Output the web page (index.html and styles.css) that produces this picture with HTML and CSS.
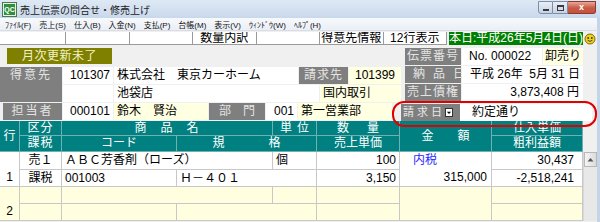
FILE: index.html
```html
<!DOCTYPE html>
<html lang="ja">
<head>
<meta charset="utf-8">
<link rel="stylesheet" href="styles.css">
</head>
<body>
<div class="win">
  <div class="titlebar">
    <div class="appicon">QC</div>
    <div class="title">売上伝票の問合せ・修売上げ</div>
    <div class="winbtns">
      <span class="wb"><span class="minbar"></span></span>
      <span class="wb"><span class="maxbox"></span></span>
      <span class="wb close">x</span>
    </div>
  </div>
  <div class="menubar">
    <span>ﾌｧｲﾙ(F)</span><span>売上(S)</span><span>仕入(B)</span><span>入金(N)</span><span>支払(P)</span><span>台帳(M)</span><span>表示(V)</span><span>ｳｨﾝﾄﾞｳ(W)</span><span>ﾍﾙﾌﾟ(H)</span>
  </div>
  <div class="toolbar">
    <span class="tb"></span><span class="tb"></span><span class="tb"></span>
    <span class="tb">数量内訳</span><span class="tb"></span>
    <span class="tb">得意先情報</span><span class="tb">12行表示</span>
    <span class="today">本日:平成26年5月4日(日)</span>
    <span class="smiley"><svg width="12" height="12" viewBox="0 0 12 12"><circle cx="6" cy="6" r="5" fill="#f2d21a" stroke="#7a6a10" stroke-width="1"/><circle cx="4.2" cy="5" r="0.9" fill="#333"/><circle cx="7.8" cy="5" r="0.9" fill="#333"/><path d="M3.6 7.3 Q6 9.4 8.4 7.3" fill="none" stroke="#333" stroke-width="0.9"/></svg></span>
  </div>
  <div class="form">
    <div class="top">
      <div class="leftcol">
        <div class="olive">月次更新未了</div>
        <div class="cust">
          <div class="lbl c-lbl">得意先</div>
          <div class="fld white num">101307</div>
          <div class="fld white c-name">株式会社　東京カーホーム</div>
          <div class="lbl c-seikyu">請求先</div>
          <div class="fld yellow ctr c-scode">101399</div>
          <div class="fld white c-blank"></div>
          <div class="fld white c-branch">池袋店</div>
          <div class="fld yellow c-kokunai">国内取引</div>
        </div>
      </div>
      <div class="rightcol">
        <div class="rrow">
          <div class="lbl rl spread">伝票番号</div>
          <div class="fld white slip">No. 000022</div>
          <div class="fld yellow oroshi">卸売り</div>
        </div>
        <div class="rrow">
          <div class="lbl rl spread3">納品日</div>
          <div class="fld white date">平成 26年&nbsp;&nbsp;5月 31 日</div>
        </div>
        <div class="rrow">
          <div class="lbl rl spread">売上債権</div>
          <div class="fld white amount">3,873,408 円</div>
        </div>
      </div>
    </div>
    <div class="rowd">
      <div class="lbl tanto">担当者</div>
      <div class="fld white num code6">000101</div>
      <div class="fld yellow person">鈴木　賢治</div>
      <div class="lbl bumon">部　門</div>
      <div class="fld white num code3">001</div>
      <div class="fld yellow dept">第一営業部</div>
      <div class="seikyubi">
        <div class="lbl sbl">請 求 日<span class="dd"><svg width="7" height="7" viewBox="0 0 7 7"><path d="M1 2.5 H6 L3.5 5.2 Z" fill="#000"/></svg></span></div>
        <div class="fld white yakujo">約定通り</div>
      </div>
      <div class="oval"></div>
    </div>
    <div class="table">
      <div class="th h-gyo">行</div>
      <div class="th h-kubun">区分</div>
      <div class="th h-name">商　品　名</div>
      <div class="th h-tani">単位</div>
      <div class="th h-suryo">数　量</div>
      <div class="th h-kingaku">金　　額</div>
      <div class="th h-shiire">仕入単価</div>
      <div class="h-sb"></div>
      <div class="th h-kazei">課税</div>
      <div class="th h-code">コード</div>
      <div class="th h-kikaku">規　　　格</div>
      <div class="th h-tanka">売上単価</div>
      <div class="th h-arari">粗利益額</div>

      <div class="td gyo r1">1</div>
      <div class="td kubun r1a">売１</div>
      <div class="td name r1a">ＡＢＣ芳香剤（ローズ）</div>
      <div class="td tani r1a">個</div>
      <div class="td suryo r1a">100</div>
      <div class="td kingaku r1"><span class="blue">内税</span><span class="kr">315,000</span></div>
      <div class="td shiire r1a">30,437</div>
      <div class="sb">
        <div class="sbup"><svg width="7" height="5" viewBox="0 0 7 5"><path d="M0.5 4.5 L3.5 1 L6.5 4.5 Z" fill="#555"/></svg></div>
      </div>
      <div class="td kubun r1b">課税</div>
      <div class="td code r1b">001003</div>
      <div class="td kikaku r1b">Ｈ－４０１</div>
      <div class="td tanka r1b">3,150</div>
      <div class="td arari r1b">-2,518,241</div>

      <div class="td gyo y r2">2</div>
      <div class="td kubun y r2a"></div>
      <div class="td name y r2a"></div>
      <div class="td tani y r2a"></div>
      <div class="td suryo y r2a"></div>
      <div class="td kingaku y r2"></div>
      <div class="td shiire y r2a"></div>
      <div class="td kubun y r2b"></div>
      <div class="td code y r2b"></div>
      <div class="td kikaku y r2b"></div>
      <div class="td tanka y r2b"></div>
      <div class="td arari y r2b"></div>
    </div>
  </div>
</div>
</body>
</html>
```

FILE: styles.css
```css
* { box-sizing: border-box; }
html, body { margin: 0; padding: 0; }
body {
  width: 600px; height: 222px; overflow: hidden;
  font-family: "Liberation Sans", "Noto Sans CJK JP", sans-serif;
  font-size: 12px; color: #000; background: #c4d5ea;
}
.win { width: 600px; height: 222px; display: flex; flex-direction: column; }

.titlebar {
  height: 18px; flex: none; display: flex; align-items: center;
  background: linear-gradient(#dfe9f5, #c8d8ec);
  padding-left: 3px;
}
.appicon {
  width: 13px; height: 13px; background: #2f8f3a; border: 1px solid #e8f2e8;
  outline: 1px solid #4a7a4a;
  color: #fff; font-size: 7px; line-height: 11px; text-align: center; font-weight: bold;
}
.title { margin-left: 4px; font-size: 10px; color: #1b1b1b; }
.winbtns { margin-left: auto; display: flex; align-self: flex-start; margin-top: 1px; margin-right: 4px; }
.wb {
  width: 15px; height: 13px; border: 1px solid #7d8ea6; border-left-width: 0;
  background: linear-gradient(#e9eff7, #c6d3e4);
  display: flex; align-items: center; justify-content: center;
}
.wb:first-child { border-left-width: 1px; border-radius: 0 0 0 3px; }
.minbar { width: 6px; height: 2px; background: #3b3b3b; margin-top: 4px; }
.maxbox { width: 7px; height: 6px; border: 1px solid #3b3b3b; border-top-width: 2px; }
.wb.close {
  width: 28px; background: linear-gradient(#e8a796, #c75a45 55%, #c8523c);
  border-color: #8a3a2e; color: #fff; font-size: 9px; font-weight: bold; line-height: 1;
  border-radius: 0 0 3px 0;
}

.menubar {
  height: 12px; flex: none; display: flex; align-items: center;
  background: linear-gradient(#f7f9fc, #eaeff6);
  border-right: 3px solid #c4d5ea;
  font-size: 8px; padding-left: 5px; color: #111;
}
.menubar span { margin-right: 8px; }

.toolbar {
  height: 15px; flex: none; display: flex; align-items: stretch;
  background: #f0f0f0; border-right: 3px solid #c4d5ea;
  border-top: 1px solid #d8dde6; padding-top: 1px;
}
.tb {
  width: 63.5px; background: #fff; border-right: 1px solid #9a9a9a;
  font-size: 12px; line-height: 13px; text-align: center; white-space: nowrap; overflow: hidden;
  border-bottom: 1px solid #9a9a9a;
}
.tb:first-child { width: 66px; }
.today {
  margin-left: 2px; width: 134px; background: #008000; color: #fff;
  font-size: 12px; line-height: 13px; text-align: center; white-space: nowrap;
}
.smiley { width: 14px; display: flex; align-items: center; justify-content: center; background: #f0f0f0; }

.form {
  flex: 1; background: #f0f0f0; border-right: 3px solid #c4d5ea;
  display: flex; flex-direction: column; padding-top: 3px; min-height: 0;
}
.top { display: flex; flex: none; }
.leftcol { width: 400px; display: flex; flex-direction: column; }
.olive {
  margin-left: 7px; width: 105px; height: 16px; background: #808000; color: #f2f2c8;
  font-size: 12px; line-height: 16px; text-align: center; letter-spacing: 0.5px;
}
.lbl {
  background: #7f7f7f; color: #e4e4e4; text-align: center; line-height: 17px;
  white-space: nowrap;
}
.fld { line-height: 17px; white-space: nowrap; overflow: hidden; padding: 0 3px; }
.white { background: #fff; }
.yellow { background: #ffffe1; }
.num { text-align: right; }
.ctr { text-align: center; }

.cust {
  margin-top: 3px; display: grid;
  grid-template-columns: 62px 50px 184px 20px 28px 52px;
  grid-template-rows: 17px 17px;
  gap: 1px; background: #f0f0f0;
}
.c-lbl { grid-row: 1 / 3; grid-column: 1; letter-spacing: 2px; }
.c-name { grid-column: 3; }
.c-seikyu { grid-column: 4 / 6; letter-spacing: 1px; }
.c-scode { grid-column: 6; }
.c-blank { grid-column: 2; grid-row: 2; }
.c-branch { grid-column: 3 / 5; grid-row: 2; }
.c-kokunai { grid-column: 5 / 7; grid-row: 2; }

.rightcol { margin-left: 5px; width: 178px; display: flex; flex-direction: column; gap: 1px; }
.rrow { display: flex; height: 17px; gap: 1px; }
.rl { width: 56px; }
.spread { letter-spacing: 1px; }
.spread3 { letter-spacing: 8px; padding-left: 8px; }
.slip { width: 80px; padding-left: 7px; }
.oroshi { flex: 1; text-align: center; padding: 0; }
.date { flex: 1; padding-left: 8px; }
.amount { flex: 1; text-align: right; padding-right: 4px; }

.rowd { display: flex; flex: none; height: 17px; margin-top: 1px; gap: 1px; position: relative; }
.tanto { margin-left: 3px; width: 59px; letter-spacing: 2px; }
.code6 { width: 50px; }
.person { width: 94px; }
.bumon { width: 56px; }
.code3 { width: 31px; }
.dept { width: 94px; }
.seikyubi { margin-left: 8px; display: flex; margin-top: 1px; height: 17px; }
.sbl { width: 59px; display: flex; align-items: center; padding-left: 2px; font-size: 11px; color: #e8e8e8; }
.dd { margin-left: 3px; width: 8px; height: 9px; background: #fff; border: 1px solid #333; display: flex; align-items: center; justify-content: center; }
.yakujo { width: 132px; padding-left: 12px; }
.oval {
  position: absolute; left: 392px; top: -2px; width: 205px; height: 26px;
  border: 2px solid #e00000; border-radius: 12px / 12px; pointer-events: none;
}

.table {
  display: grid; flex: none;
  grid-template-columns: 20px 42px 115px 96px 44px 83px 92px 91px 14px;
  grid-template-rows: 15px 16px 18px 17px 17px 17px;
  margin-top: 1px;
  background: #c8c8c8;
}
.th {
  background: #008080; color: #fff; text-align: center; line-height: 15px;
  border-right: 1px solid #6fb0b0; border-bottom: 1px solid #6fb0b0; white-space: nowrap;
}
.h-gyo { grid-column: 1; grid-row: 1 / 3; line-height: 30px; }
.h-kubun { grid-column: 2; grid-row: 1; letter-spacing: 1px; }
.h-name { grid-column: 3 / 5; grid-row: 1; letter-spacing: 1px; }
.h-tani { grid-column: 5; grid-row: 1; letter-spacing: 5px; text-indent: 5px; }
.h-suryo { grid-column: 6; grid-row: 1; letter-spacing: 3px; text-indent: 3px; }
.h-kingaku { grid-column: 7; grid-row: 1 / 3; line-height: 30px; }
.h-shiire { grid-column: 8; grid-row: 1; }
.h-sb { grid-column: 9; grid-row: 1 / 3; background: #f0f0f0; }
.h-kazei { grid-column: 2; grid-row: 2; letter-spacing: 1px; }
.h-code { grid-column: 3; grid-row: 2; }
.h-kikaku { grid-column: 4 / 6; grid-row: 2; letter-spacing: 2px; text-indent: 2px; }
.h-tanka { grid-column: 6; grid-row: 2; }
.h-arari { grid-column: 8; grid-row: 2; }

.td {
  background: #fff; border-right: 1px solid #c8c8c8; border-bottom: 1px solid #c8c8c8;
  white-space: nowrap; overflow: hidden; line-height: 16px; padding: 0 3px;
}
.td.y { background: #ffffe0; }
.r1 { grid-row: 3 / 5; }
.r1a { grid-row: 3; }
.r1b { grid-row: 4; }
.r2 { grid-row: 5 / 7; }
.r2a { grid-row: 5; }
.r2b { grid-row: 6; }
.gyo { grid-column: 1; display: flex; align-items: flex-end; justify-content: center; padding-bottom: 1px; }
.kubun { grid-column: 2; text-align: center; }
.name { grid-column: 3 / 5; }
.tani { grid-column: 5; }
.suryo { grid-column: 6; text-align: right; }
.kingaku { grid-column: 7; display: flex; flex-direction: column; }
.kingaku .blue { color: #2a2aff; padding-left: 10px; line-height: 17px; }
.kingaku .kr { text-align: right; padding-right: 1px; line-height: 17px; }
.shiire { grid-column: 8; text-align: right; padding-right: 8px; }
.code { grid-column: 3; }
.kikaku { grid-column: 4 / 6; }
.tanka { grid-column: 6; text-align: right; }
.arari { grid-column: 8; text-align: right; padding-right: 8px; }
.sb { grid-column: 9; grid-row: 3 / 7; background: #e8e8e8; display: flex; flex-direction: column; border-left: 1px solid #d8d8d8; }
.sbup { height: 15px; background: linear-gradient(90deg, #f4f4f4, #dcdcdc); border: 1px solid #b8b8b8; display: flex; align-items: center; justify-content: center; }
```
